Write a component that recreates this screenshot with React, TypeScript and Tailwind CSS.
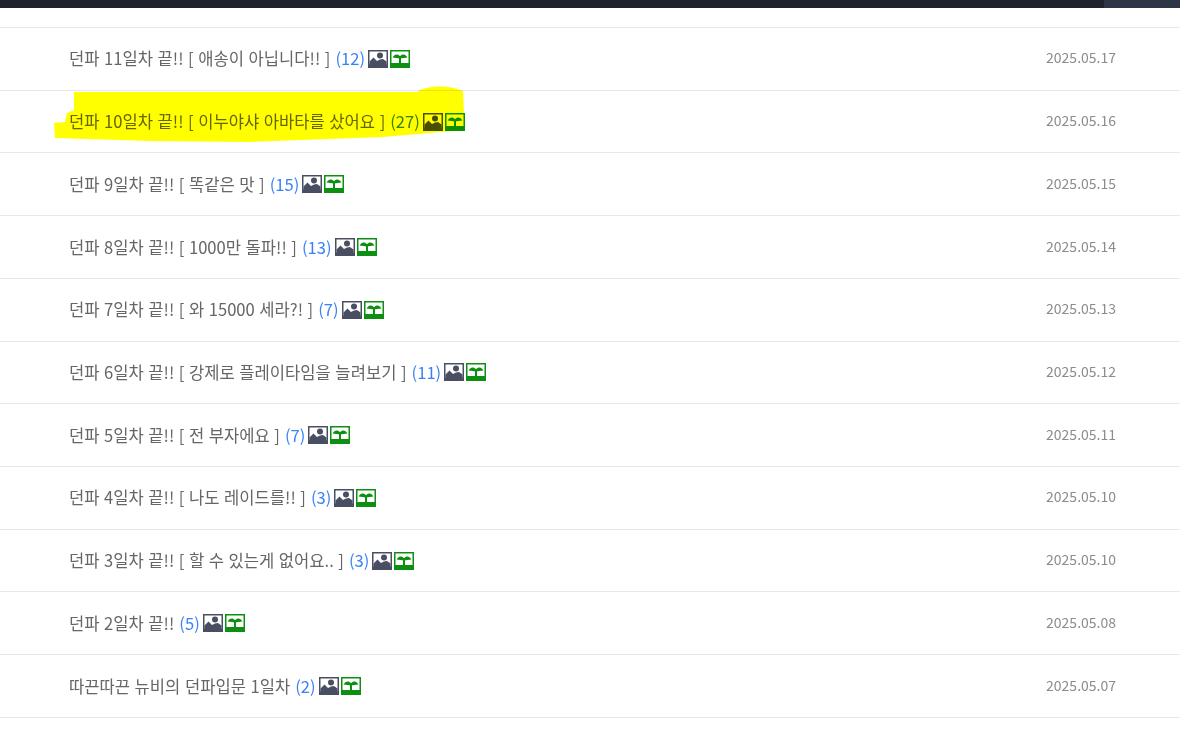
const rows = [
  { title: "던파 11일차 끝!! [ 애송이 아닙니다!! ]", count: 12, date: "2025.05.17" },
  { title: "던파 10일차 끝!! [ 이누야샤 아바타를 샀어요 ]", count: 27, date: "2025.05.16", marked: true },
  { title: "던파 9일차 끝!! [ 똑같은 맛 ]", count: 15, date: "2025.05.15" },
  { title: "던파 8일차 끝!! [ 1000만 돌파!! ]", count: 13, date: "2025.05.14" },
  { title: "던파 7일차 끝!! [ 와 15000 세라?! ]", count: 7, date: "2025.05.13" },
  { title: "던파 6일차 끝!! [ 강제로 플레이타임을 늘려보기 ]", count: 11, date: "2025.05.12" },
  { title: "던파 5일차 끝!! [ 전 부자에요 ]", count: 7, date: "2025.05.11" },
  { title: "던파 4일차 끝!! [ 나도 레이드를!! ]", count: 3, date: "2025.05.10" },
  { title: "던파 3일차 끝!! [ 할 수 있는게 없어요.. ]", count: 3, date: "2025.05.10" },
  { title: "던파 2일차 끝!!", count: 5, date: "2025.05.08" },
  { title: "따끈따끈 뉴비의 던파입문 1일차", count: 2, date: "2025.05.07" },
]

const ImageIcon = () => (
  <svg width="20" height="18" viewBox="0 0 20 18" className="block shrink-0">
    <rect width="20" height="18" fill="#4a4e62" />
    <rect x="1.5" y="1.5" width="17" height="13" fill="#fff" />
    <circle cx="12" cy="5.5" r="3" fill="#4a4e62" />
    <path d="M1.5 11.5 L5.5 7.5 L9 11 L12 9.5 L15 9 L18.5 11.5 V15 H1.5 Z" fill="#4a4e62" />
  </svg>
)

const PlantIcon = () => (
  <svg width="20" height="18" viewBox="0 0 20 18" className="block shrink-0">
    <rect width="20" height="18" fill="#0d8f12" />
    <rect x="1.5" y="1.5" width="17" height="11.5" fill="#fff" />
    <path d="M10 6.5 C8 3.8 4.5 3.8 2.6 7.6 C5 7.8 8 8.2 10 8.6 Z" fill="#0d8f12" />
    <path d="M10 6.5 C12 3.8 15.5 3.8 17.4 7.6 C15 7.8 12 8.2 10 8.6 Z" fill="#0d8f12" />
    <rect x="9" y="6" width="2" height="7.5" fill="#0d8f12" />
  </svg>
)

const Highlight = () => (
  <svg
    width="420"
    height="60"
    viewBox="0 0 420 60"
    className="absolute left-[50px] top-[83px] mix-blend-multiply pointer-events-none"
  >
    <path
      fill="#ffff00"
      d="M24 9 L150 9 L290 9 L367 9 C372 4 395 0 413 8 L414 30 L414 47 L333 54 L200 59 L100 58 L5 55 L4 40 L15 39 L17 30 L24 27 Z"
    />
  </svg>
)

const App = () => {
  return (
    <div className="relative w-[1180px] h-[743px] overflow-hidden bg-white font-['Noto_Sans_CJK_KR','Noto_Sans',sans-serif]">
      <div className="flex h-2 bg-[#20232e]">
        <div className="flex-1" />
        <div className="w-[76px] bg-[#2e3546]" />
      </div>
      <div className="mt-[19px] border-t border-[#e8e8e8]">
        {rows.map((row) => (
          <div
            key={row.title}
            className="flex h-[62.73px] items-center justify-between border-b border-[#e8e8e8] pb-[2px] pl-[69px] pr-[64px]"
          >
            <div className="mt-[2px] flex items-center text-[16.6px] text-[#666666] [word-spacing:0.8px]">
              <span>{row.title}</span>
              <span className="ml-[5px] text-[#3b82f6]">({row.count})</span>
              <span className="ml-[3px]"><ImageIcon /></span>
              <span className="ml-[2px]"><PlantIcon /></span>
            </div>
            <span className="text-[14px] text-[#8c8c8c]">{row.date}</span>
          </div>
        ))}
      </div>
      <Highlight />
    </div>
  )
}

export default App
